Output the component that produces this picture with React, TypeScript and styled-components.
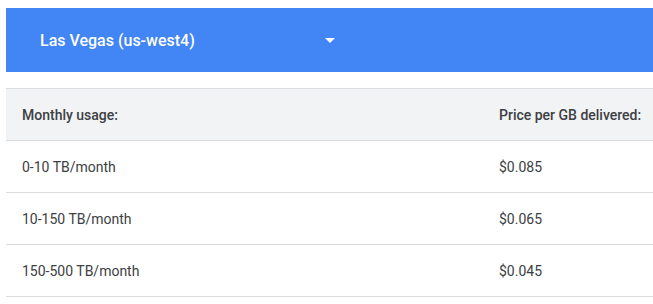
import styled, { createGlobalStyle } from 'styled-components';

const GlobalStyle = createGlobalStyle`
  body {
    margin: 0;
    padding: 8px 0 0 6px;
    background: #ffffff;
    font-family: Roboto, 'Liberation Sans', Arial, sans-serif;
    overflow: hidden;
  }
`;

interface PriceTier {
  usage: string;
  price: string;
}

const tiers: PriceTier[] = [
  { usage: '0-10 TB/month', price: '$0.085' },
  { usage: '10-150 TB/month', price: '$0.065' },
  { usage: '150-500 TB/month', price: '$0.045' },
];

const Wrapper = styled.div`
  display: flex;
  flex-direction: column;
  gap: 16px;
`;

const RegionSelect = styled.div`
  height: 64px;
  background: #4285f4;
  display: flex;
  align-items: center;
  padding-left: 34px;
  color: #ffffff;
  font-size: 16px;
  font-weight: 500;
`;

const RegionLabel = styled.span`
  width: 285px;
`;

const Arrow = styled.span`
  width: 0;
  height: 0;
  border-left: 5px solid transparent;
  border-right: 5px solid transparent;
  border-top: 5px solid #ffffff;
  margin-top: 1px;
`;

const Table = styled.div`
  display: flex;
  flex-direction: column;
  border-top: 1px solid #dadce0;
`;

const Row = styled.div<{ header?: boolean }>`
  display: grid;
  grid-template-columns: 477px 1fr;
  align-items: center;
  height: 51px;
  padding-left: 16px;
  border-bottom: 1px solid #dadce0;
  background: ${({ header }) => (header ? '#f1f3f4' : '#ffffff')};
  color: #3c4043;
  font-size: 14px;
  font-weight: ${({ header }) => (header ? 500 : 400)};
  white-space: nowrap;
`;

export default function App() {
  return (
    <>
      <GlobalStyle />
      <Wrapper>
        <RegionSelect>
          <RegionLabel>Las Vegas (us-west4)</RegionLabel>
          <Arrow />
        </RegionSelect>
        <Table>
          <Row header>
            <span>Monthly usage:</span>
            <span>Price per GB delivered:</span>
          </Row>
          {tiers.map((tier) => (
            <Row key={tier.usage}>
              <span>{tier.usage}</span>
              <span>{tier.price}</span>
            </Row>
          ))}
        </Table>
      </Wrapper>
    </>
  );
}
